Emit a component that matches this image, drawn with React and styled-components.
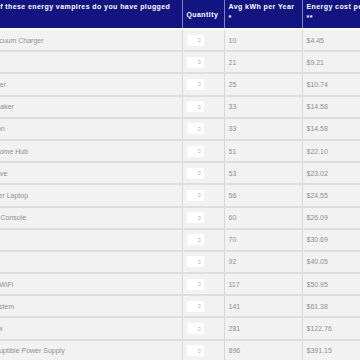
import React from 'react';
import styled, { createGlobalStyle } from 'styled-components';

const GlobalStyle = createGlobalStyle`
  html, body {
    margin: 0;
    padding: 0;
    background: #fff;
  }
  body {
    font-family: "Liberation Sans", Arial, sans-serif;
  }
`;

const Viewport = styled.div`
  width: 360px;
  height: 360px;
  overflow: hidden;
`;

const Table = styled.table`
  margin-left: -30px;
  border-collapse: collapse;
  table-layout: fixed;
  width: 422px;
`;

const HeadRow = styled.tr`
  height: 29px;
`;

const HeadCell = styled.th`
  background: #121480;
  color: #fff;
  font-size: 7px;
  font-weight: 700;
  letter-spacing: 0.42px;
  line-height: 11px;
  text-align: left;
  vertical-align: ${p => (p.$middle ? 'middle' : 'top')};
  padding: ${p => (p.$middle ? '0 4px' : '1px 4px 0')};
  padding-left: ${p => (p.$flush ? '0' : '4px')};
  border-right: 1px solid #7f82bf;
  border-bottom: 2px solid #fff;
  white-space: nowrap;
`;

const Row = styled.tr`
  height: 22.2px;
`;

const Cell = styled.td`
  background: #f2f2f2;
  color: #909090;
  font-size: 7px;
  line-height: 9px;
  padding: 0 4px;
  vertical-align: middle;
  border-right: 1px solid #d6d6d6;
  border-bottom: 2px solid #dedede;
  white-space: nowrap;
`;

const Stepper = styled.div`
  width: 17px;
  height: 11px;
  background: #fff;
  border-radius: 1px;
  display: flex;
  align-items: center;
  justify-content: flex-end;
  padding-right: 2.5px;
  box-sizing: border-box;
`;

const SpinIcon = () => (
  <svg width="3" height="6" viewBox="0 0 3 6">
    <path d="M0.4 2.4 L1.5 1 L2.6 2.4" fill="none" stroke="#9a9a9a" strokeWidth="0.7" />
    <path d="M0.4 3.6 L1.5 5 L2.6 3.6" fill="none" stroke="#9a9a9a" strokeWidth="0.7" />
  </svg>
);

const vampires = [
  { name: 'Stick Vacuum Charger', kwh: 10, cost: '$4.45' },
  { name: 'Toaster', kwh: 21, cost: '$9.21' },
  { name: 'Hair Dryer', kwh: 25, cost: '$10.74' },
  { name: 'Coffeemaker', kwh: 33, cost: '$14.58' },
  { name: 'Television', kwh: 33, cost: '$14.58' },
  { name: 'Smart Home Hub', kwh: 51, cost: '$22.10' },
  { name: 'Microwave', kwh: 53, cost: '$23.02' },
  { name: 'Computer Laptop', kwh: 56, cost: '$24.55' },
  { name: 'Gaming Console', kwh: 60, cost: '$26.09' },
  { name: 'Printer', kwh: 70, cost: '$30.69' },
  { name: 'Desktop', kwh: 92, cost: '$40.05' },
  { name: 'Modem WiFi', kwh: 117, cost: '$50.95' },
  { name: 'Hi-Fi System', kwh: 141, cost: '$61.38' },
  { name: 'DVR Box', kwh: 281, cost: '$122.76' },
  { name: 'Uninterruptible Power Supply', kwh: 896, cost: '$391.15' },
];

const Headers = () => (
  <thead>
    <HeadRow>
      <HeadCell $flush>
        Which of these energy vampires do you have plugged
        <br />
        in?
      </HeadCell>
      <HeadCell $middle>Quantity</HeadCell>
      <HeadCell>
        Avg kWh per Year
        <br />
        *
      </HeadCell>
      <HeadCell>
        Energy cost per Year
        <br />
        **
      </HeadCell>
    </HeadRow>
  </thead>
);

const Rows = ({ list = [] }) => (
  <tbody>
    {list.map((item, i) => (
      <Row key={`vampire-${i}`}>
        <Cell>{item.name}</Cell>
        <Cell>
          <Stepper>
            <SpinIcon />
          </Stepper>
        </Cell>
        <Cell>{item.kwh}</Cell>
        <Cell>{item.cost}</Cell>
      </Row>
    ))}
  </tbody>
);

export default function App() {
  return (
    <>
      <GlobalStyle />
      <Viewport>
        <Table>
          <colgroup>
            <col style={{ width: 212 }} />
            <col style={{ width: 42 }} />
            <col style={{ width: 78 }} />
            <col style={{ width: 90 }} />
          </colgroup>
          <Headers />
          <Rows list={vampires} />
        </Table>
      </Viewport>
    </>
  );
}
